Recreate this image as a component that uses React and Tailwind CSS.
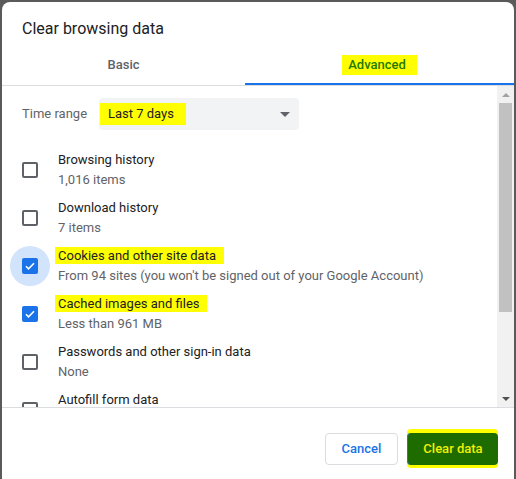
const items = [
  { title: "Browsing history", sub: "1,016 items", checked: false },
  { title: "Download history", sub: "7 items", checked: false },
  { title: "Cookies and other site data", sub: "From 94 sites (you won't be signed out of your Google Account)", checked: true, mark: true, focus: true },
  { title: "Cached images and files", sub: "Less than 961 MB", checked: true, mark: true },
  { title: "Passwords and other sign-in data", sub: "None", checked: false },
  { title: "Autofill form data", sub: "", checked: false },
]

function Checkbox({ checked, focus }) {
  return (
    <div className="relative w-[16px] h-[16px] shrink-0">
      {focus && <div className="absolute -left-[12px] -top-[12px] w-[40px] h-[40px] rounded-full bg-[#d2e3fc]" />}
      {checked ? (
        <div className="relative w-[16px] h-[16px] rounded-[2px] bg-[#1a73e8] flex items-center justify-center">
          <svg width="12" height="12" viewBox="0 0 24 24">
            <path d="M4 12.5l5 5L20 6.5" fill="none" stroke="#fff" strokeWidth="3.2" />
          </svg>
        </div>
      ) : (
        <div className="w-[16px] h-[16px] rounded-[2px] border-2 border-[#5f6368]" />
      )}
    </div>
  )
}

export default function App() {
  return (
    <div className="w-[516px] h-[479px] overflow-hidden bg-[#5a5a5a] pt-[2px] px-[2px]" style={{ fontFamily: "Roboto, 'Liberation Sans', sans-serif" }}>
      <div className="w-[512px] h-[477px] bg-white rounded-t-[8px] flex flex-col overflow-hidden">
        <div className="h-[46px] pl-[20px] pt-[16px] text-[16px] leading-[22px] text-[#202124]">Clear browsing data</div>

        <div className="flex h-[38px] border-b border-[#dadce0]">
          <div className="w-[243px] flex items-center justify-center pb-[4px] text-[13px] font-medium text-[#5f6368]">Basic</div>
          <div className="flex-1 flex items-center justify-center border-b-2 border-[#1a73e8] text-[13px] font-medium">
            <span className="bg-[#ffff00] text-[#237a00] pl-[6px] pr-[11px] leading-[20px] mb-[2px]">Advanced</span>
          </div>
        </div>

        <div className="h-[322px] flex border-b border-[#dadce0]">
          <div className="flex-1 overflow-hidden">
            <div className="flex items-center pt-[12px] pl-[20px] h-[44px]">
              <span className="text-[13px] text-[#5f6368] w-[77px]">Time range</span>
              <div className="w-[200px] h-[32px] rounded-[4px] bg-[#f1f3f4] flex items-center justify-between pl-[1px] pr-[9px]">
                <span className="bg-[#ffff00] text-[13px] text-[#202124] pl-[8px] pr-[12px] leading-[22px]">Last 7 days</span>
                <svg width="10" height="5" viewBox="0 0 10 5"><path d="M0 0h10L5 5z" fill="#5f6368" /></svg>
              </div>
            </div>
            <div className="pt-[16px]">
              {items.map((it) => (
                <div key={it.title} className="h-[48px] flex items-center pl-[20px]">
                  <Checkbox checked={it.checked} focus={it.focus} />
                  <div className="ml-[20px] text-[13px] leading-[20px]">
                    <div className="text-[#202124]">
                      {it.mark ? <span className="bg-[#ffff00] -ml-[3px] pl-[3px] pr-[8px] py-[1px]">{it.title}</span> : it.title}
                    </div>
                    <div className="text-[#5f6368] h-[20px]">{it.sub}</div>
                  </div>
                </div>
              ))}
            </div>
          </div>
          <div className="w-[17px] bg-[#f1f1f1] flex flex-col items-center">
            <div className="h-[17px] flex items-center justify-center">
              <svg width="8" height="4" viewBox="0 0 8 4"><path d="M0 4h8L4 0z" fill="#a3a3a3" /></svg>
            </div>
            <div className="w-[13px] h-[209px] bg-[#c1c1c1]" />
            <div className="flex-1" />
            <div className="h-[17px] flex items-center justify-center">
              <svg width="8" height="4" viewBox="0 0 8 4"><path d="M0 0h8L4 4z" fill="#505050" /></svg>
            </div>
          </div>
        </div>

        <div className="flex justify-end items-start pt-[25px] pr-[16px] gap-[9px]">
          <button className="w-[73px] h-[32px] rounded-[4px] border border-[#dadce0] bg-white text-[13px] font-medium text-[#1a73e8]">Cancel</button>
          <button className="w-[91px] h-[32px] rounded-[4px] border-l border-[#1a73e8] bg-[#1e6b00] text-[13px] font-medium text-[#f0f000] shadow-[0_-4px_0_#ffff00,0_3px_0_#ffff00]">Clear data</button>
        </div>
      </div>
    </div>
  )
}
